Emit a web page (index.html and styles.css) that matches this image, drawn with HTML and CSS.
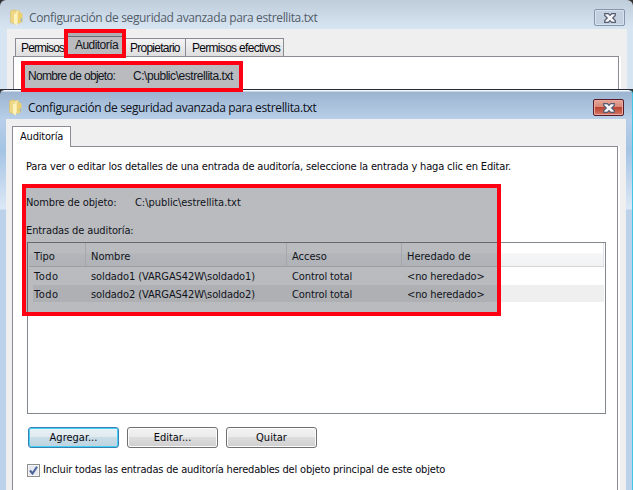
FILE: index.html
```html
<!DOCTYPE html>
<html lang="es">
<head>
<meta charset="utf-8">
<title>Configuración de seguridad avanzada para estrellita.txt</title>
<link rel="stylesheet" href="styles.css">
</head>
<body>
<svg width="0" height="0" class="defs">
  <symbol id="folder" viewBox="0 0 14 17">
    <path d="M.5 2L4 .8L6 1.500V15L.5 13.500Z" fill="#eed886" stroke="#d6bb62" stroke-width=".6"/>
    <path d="M5 2.500L8.500 1L9.500 2V13L5 15.500Z" fill="#f8e9a8" stroke="#d9bf68" stroke-width=".5"/>
    <path d="M8 2.500L12.500 4.500V13L8 15Z" fill="#ebcf70"/>
    <path d="M4 4.500L7 5.500V16.500L4 14.500Z" fill="#fff3bd"/>
    <path d="M11.500 9.500V12.500" stroke="#8eb5cf" stroke-width="1.300"/>
  </symbol>
  <symbol id="close" viewBox="0 0 12 10">
    <path d="M.7 .7H4.300L6 2.400L7.700 .7H11.300V2.400L8.700 5L11.300 7.600V9.300H7.700L6 7.600L4.300 9.300H.7V7.600L3.300 5L.7 2.400Z" fill="#f4f4f6" stroke="#555b70" stroke-width="1.200"/>
  </symbol>
</svg>
<main class="screen">
  <section class="window back">
    <header class="titlebar">
      <svg class="folder"><use href="#folder"/></svg>
      <h1>Configuración de seguridad avanzada para estrellita.txt</h1>
      <button class="close"><svg><use href="#close"/></svg></button>
    </header>
    <div class="client">
      <nav class="tabs">
        <span class="tab first">Permisos</span>
        <span class="tab selected">Auditoría</span>
        <span class="tab owner">Propietario</span>
        <span class="tab effective">Permisos efectivos</span>
      </nav>
      <div class="panel">
        <p class="object"><span>Nombre de objeto:</span><span>C:\public\estrellita.txt</span></p>
      </div>
    </div>
  </section>
  <section class="window front">
    <header class="titlebar">
      <svg class="folder"><use href="#folder"/></svg>
      <h1>Configuración de seguridad avanzada para estrellita.txt</h1>
      <button class="close"><svg><use href="#close"/></svg></button>
    </header>
    <div class="client">
      <nav class="tabs"><span class="tab">Auditoría</span></nav>
      <div class="panel">
        <p class="help">Para ver o editar los detalles de una entrada de auditoría, seleccione la entrada y haga clic en Editar.</p>
        <p class="object"><span>Nombre de objeto:</span><span>C:\public\estrellita.txt</span></p>
        <p class="label">Entradas de auditoría:</p>
        <div class="list">
          <div class="row head"><span>Tipo</span><span>Nombre</span><span>Acceso</span><span>Heredado de</span></div>
          <div class="row"><span class="kind">Todo</span><span>soldado1 (VARGAS42W\soldado1)</span><span>Control total</span><span>&lt;no heredado&gt;</span></div>
          <div class="row alt"><span class="kind">Todo</span><span>soldado2 (VARGAS42W\soldado2)</span><span>Control total</span><span>&lt;no heredado&gt;</span></div>
        </div>
        <div class="buttons">
          <button class="primary">Agregar...</button>
          <button>Editar...</button>
          <button>Quitar</button>
        </div>
        <div class="inherit">
          <span class="box"><svg viewBox="0 0 9 9"><path d="M1 4.500L3.500 7.500L8 .8" fill="none" stroke="#4a5f97" stroke-width="2"/></svg></span>
          <span class="caption">Incluir todas las entradas de auditoría heredables del objeto principal de este objeto</span>
        </div>
      </div>
    </div>
  </section>
  <div class="mark mark-tab"></div>
  <div class="mark mark-name"></div>
  <div class="mark mark-entries"></div>
</main>
</body>
</html>
```

FILE: styles.css
```css
* { box-sizing: border-box; }
body { margin: 0; }
p, h1 { margin: 0; font-weight: normal; white-space: nowrap; }
button { padding: 0; font: inherit; color: inherit; }
.defs { position: absolute; }
.screen {
  position: relative;
  width: 633px;
  height: 490px;
  overflow: hidden;
  font: 11px/14px "DejaVu Sans Condensed", "DejaVu Sans", sans-serif;
  font-stretch: condensed;
  color: #08080f;
  background: #333;
}
.window { overflow: hidden; }
.titlebar { display: flex; }
.titlebar h1 { font: 12px/18px "Open Sans", "Noto Sans", sans-serif; flex: 1; margin-left: 5px; letter-spacing: -.36px; }
.folder { width: 14px; height: 17px; }
.close { display: flex; align-items: center; justify-content: center; width: 31px; height: 17px; border-radius: 2px; }
.close svg { width: 12px; height: 10px; }

.back {
  height: 89px;
  padding: 1px 6px 0 7px;
  border-radius: 6px 6px 0 0;
  background: linear-gradient(#bfcddb 0, #d7e4f2 28px, #d7e4f2);
}
.back .titlebar { height: 28px; padding: 8px 2px 0 3px; }
.back h1 { color: #535d68; }
.back .close { border: 1px solid #8795ac; background: #c2d0e0; box-shadow: inset 0 0 0 1px #d7e2ee; }
.back .client {
  height: 60px;
  padding: 7px 6px 0;
  background: #efefef;
  font: 12px/16px "Liberation Sans", Arial, sans-serif;
}
.back .tabs { display: flex; align-items: flex-end; height: 20px; padding-left: 2px; }
.back .tab {
  height: 18px;
  border: 1px solid #898c95;
  border-bottom: 0;
  border-left-width: 0;
  background: linear-gradient(#f4f4f4, #dedede);
  white-space: nowrap;
  padding-left: 5px;
  padding-top: 1px;
}
.back .first { width: 51px; border-left-width: 1px; letter-spacing: -.85px; }
.back .selected { width: 60px; height: 20px; padding-left: 9px; padding-top: 0; background: #fff; letter-spacing: -.55px; }
.back .owner { width: 60px; padding-left: 4px; letter-spacing: -.75px; }
.back .effective { width: 98px; padding-left: 6px; letter-spacing: -.7px; }
.back .panel { width: 606px; height: 33px; border: 1px solid #898c95; border-bottom: 0; background: #fff; padding: 11px 0 0 14px; box-shadow: 2px 0 #fff; }
.object { display: flex; }
.back .object { letter-spacing: -.45px; }
.back .object span:first-child { width: 105px; letter-spacing: -.68px; }

.front {
  height: 401px;
  padding-left: 6px;
  padding-right: 6px;
  border-top: 1px solid #282c38;
  border-right: 1px solid #43c5e5;
  border-radius: 5px 5px 0 0;
  background: linear-gradient(#f4f8fc 0, #f4f8fc 1px, #9db4d1 2px, #b8cfe9 29px, #a4c3e4 60px, #dce8f6 119px, #bcd1ea 120px);
}
.front .titlebar { height: 29px; padding: 9px 2px 0 3px; }
.front h1 { color: #0d1118; }
.front .close { border: 1px solid #571c28; background: linear-gradient(#e6a697 0, #d78778 48%, #bb4432 50%, #d27764); box-shadow: inset 0 0 0 1px #e8aaa0; }
.front .client { height: 371px; padding: 7px 6px 0; background: #efefef; }
.front .tab {
  display: block;
  position: relative;
  width: 59px;
  height: 21px;
  margin-bottom: -1px;
  padding: 3px 0 0 7px;
  border: 1px solid #898c95;
  border-bottom: 0;
  background: #fff;
  letter-spacing: -.2px;
}
.front .panel { width: 606px; height: 350px; padding: 13px 0 0 14px; border: 1px solid #898c95; background: #fff; box-shadow: 2px 0 #fff; }
.help, .front .object, .label { margin-left: -1px; letter-spacing: -.12px; }
.help { letter-spacing: -.165px; }
.front .object { margin-top: 22px; }
.front .object span:first-child { width: 109px; }
.front .object span:last-child { letter-spacing: -.04px; }
.label { margin-top: 14px; }
.list { width: 579px; height: 172px; margin-top: 4px; border: 1px solid #828790; background: #fff; }
.row { display: grid; grid-template-columns: 57px 201px 115px 199px; width: 571px; height: 17px; margin-left: 5px; line-height: 18px; letter-spacing: -.1px; }
.row span { padding-left: 1px; white-space: nowrap; }
.row .kind { letter-spacing: .5px; }
.row.alt { background: #efefef; line-height: 19px; }
.row.head { height: 24px; margin-left: 1px; width: 575px; grid-template-columns: 57px 201px 115px 202px; line-height: 27px; border-bottom: 1px solid #d5d5d5; margin-bottom: 1px; background: linear-gradient(#fff 0, #fff 10px, #f5f6f8 11px, #f1f2f4); letter-spacing: 0; }
.row.head span { height: 23px; padding-left: 5px; border-right: 1px solid #e0e3e8; }
.buttons { display: flex; gap: 8px; margin: 13px 0 0 1px; }
.buttons button { width: 91px; height: 21px; border: 1px solid #707070; border-radius: 3px; background: linear-gradient(#f2f2f2 0, #ebebeb 48%, #dddddd 50%, #cfcfcf); box-shadow: inset 0 0 0 1px #fcfcfc; }
.buttons .primary { border-color: #3c7fb1; background: linear-gradient(#e9f2f6 0, #dfeaf0 48%, #c9dde7 50%, #bdd3df); box-shadow: inset 0 0 0 1px #45d1f7; }
.inherit { display: flex; align-items: center; margin-top: 15px; gap: 3px; white-space: nowrap; letter-spacing: -.19px; }
.box { width: 13px; height: 13px; border: 1px solid #8e8f8f; background: #e4e8ef; box-shadow: inset 0 0 0 1px #f4f4f4; padding: 1px; }
.box svg { display: block; width: 9px; height: 9px; }

.mark { position: absolute; border: 4px solid #fe0012; background: rgba(38, 42, 52, .32); }
.mark-tab { left: 64px; top: 29px; width: 62px; height: 29px; }
.mark-name { left: 21px; top: 61px; width: 222px; height: 31px; }
.mark-entries { left: 22px; top: 184px; width: 479px; height: 132px; }
```
